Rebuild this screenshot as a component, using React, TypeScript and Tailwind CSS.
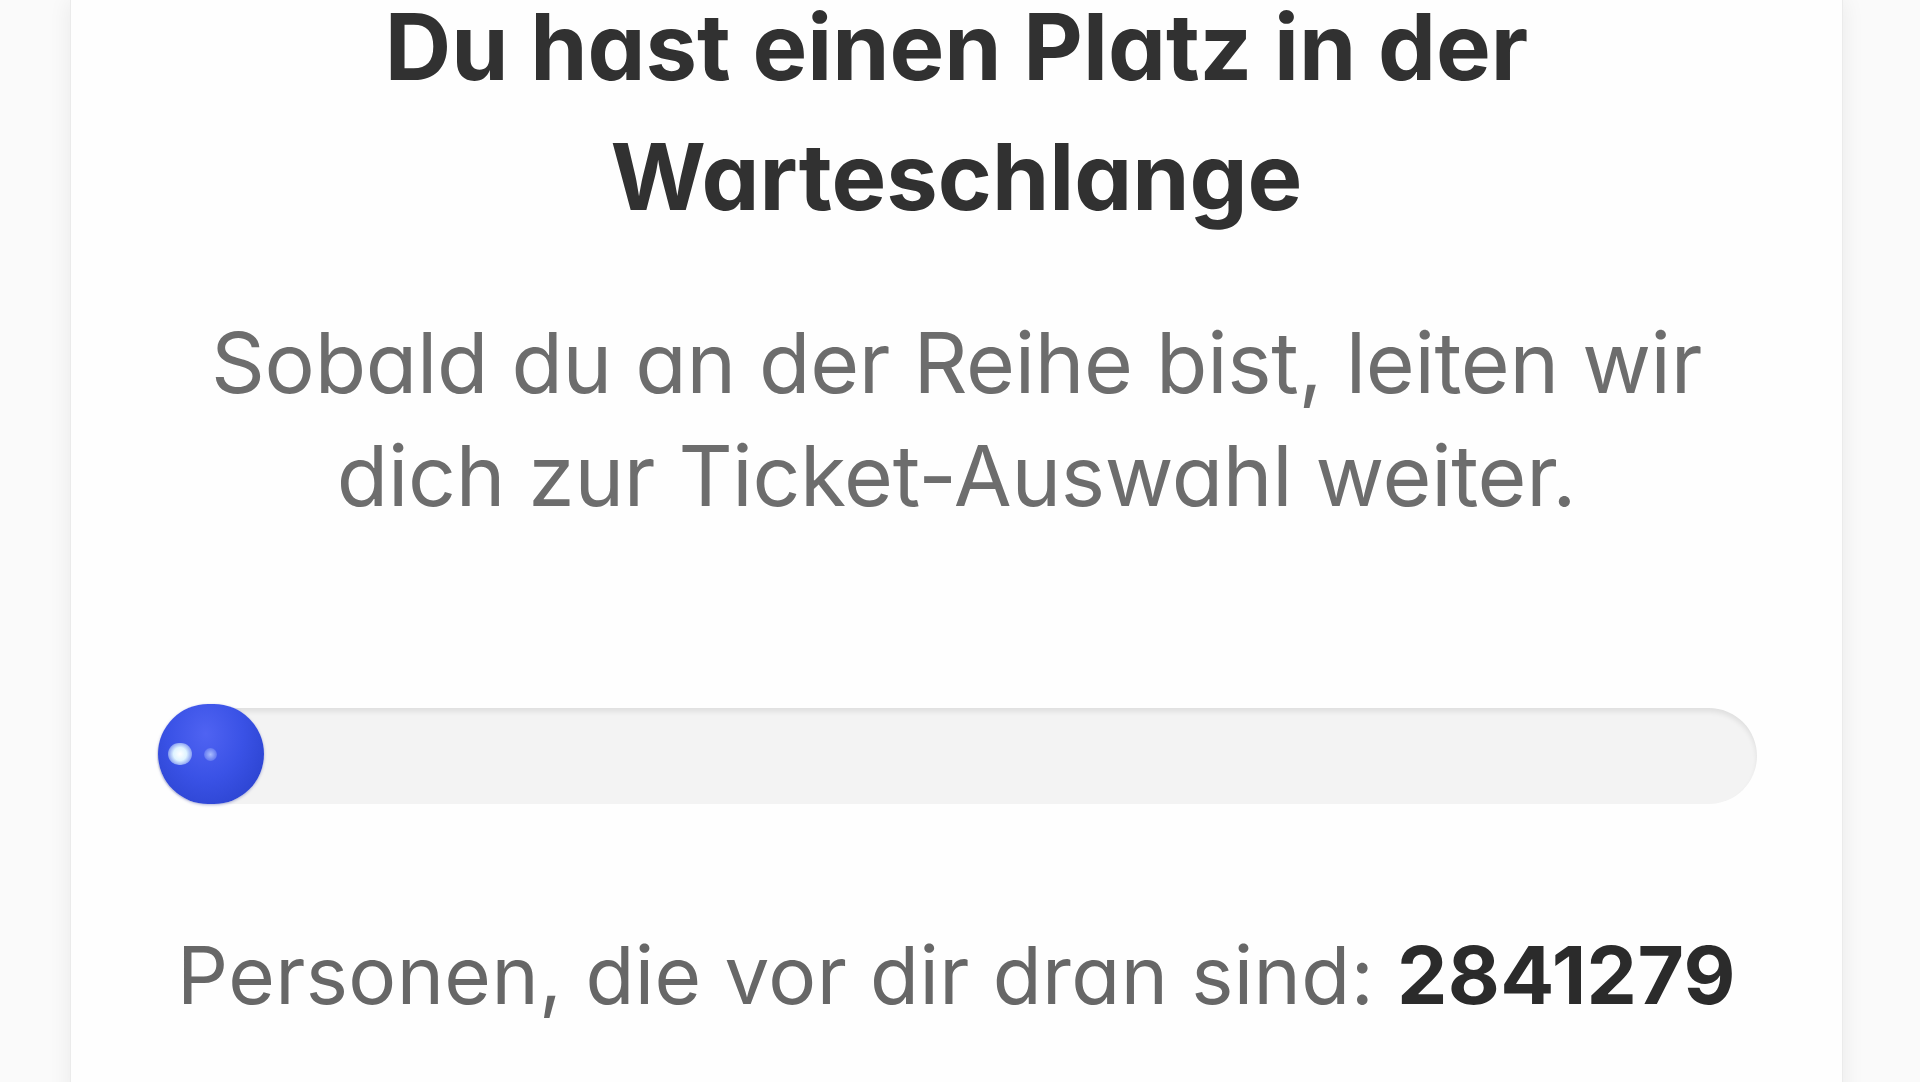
import React from "react";

const queueAhead = 2841279;

function QueueProgress() {
  return (
    <div className="relative h-[96px] w-[1600px] rounded-full bg-[#f3f3f3] shadow-[inset_0_4px_5px_rgba(0,0,0,0.08)]">
      {/* moving knob */}
      <div className="absolute left-[1px] top-[-4px] h-[100px] w-[106px] rounded-full bg-[radial-gradient(ellipse_at_45%_30%,#4f63f2_0%,#3a52e6_45%,#2d45d2_80%,#2639b6_100%)] shadow-[0_1px_3px_rgba(30,40,150,0.35)]">
        <span className="absolute left-[10px] top-[39px] h-[22px] w-[24px] rounded-full bg-[radial-gradient(circle,#ffffff_0%,#dff4ff_40%,rgba(140,200,255,0)_100%)]" />
        <span className="absolute left-[46px] top-[44px] h-[13px] w-[13px] rounded-full bg-[radial-gradient(circle,rgba(175,195,255,0.95)_0%,rgba(120,140,255,0)_100%)]" />
      </div>
    </div>
  );
}

export default function App() {
  return (
    <div className="h-[1082px] w-full overflow-hidden bg-[#fafafa] font-['Inter',sans-serif] [font-feature-settings:'cv11']">
      <div className="ml-[70px] flex h-[1100px] w-[1773px] flex-col items-center border-x border-[#ebebeb] bg-[#fefefe] shadow-[0_0_22px_rgba(0,0,0,0.07)]">
        <h1 className="mt-[-18px] text-center text-[92px] font-bold leading-[130px] tracking-[0px] text-[#313131]">
          Du hast einen Platz in der
          <br />
          Warteschlange
        </h1>
        <p className="mt-[64px] text-center text-[84px] font-normal leading-[113px] tracking-[-0.3px] text-[#6d6d6d]">
          Sobald du an der Reihe bist, leiten wir
          <br />
          dich zur Ticket-Auswahl weiter.
        </p>
        <div className="mt-[176px]">
          <QueueProgress />
        </div>
        <p className="mt-[121px] text-center text-[80px] leading-[100px] tracking-[0.4px] text-[#676767]">
          Personen, die vor dir dran sind:{" "}
          <span className="font-bold text-[#2b2b2b]">{queueAhead}</span>
        </p>
      </div>
    </div>
  );
}
